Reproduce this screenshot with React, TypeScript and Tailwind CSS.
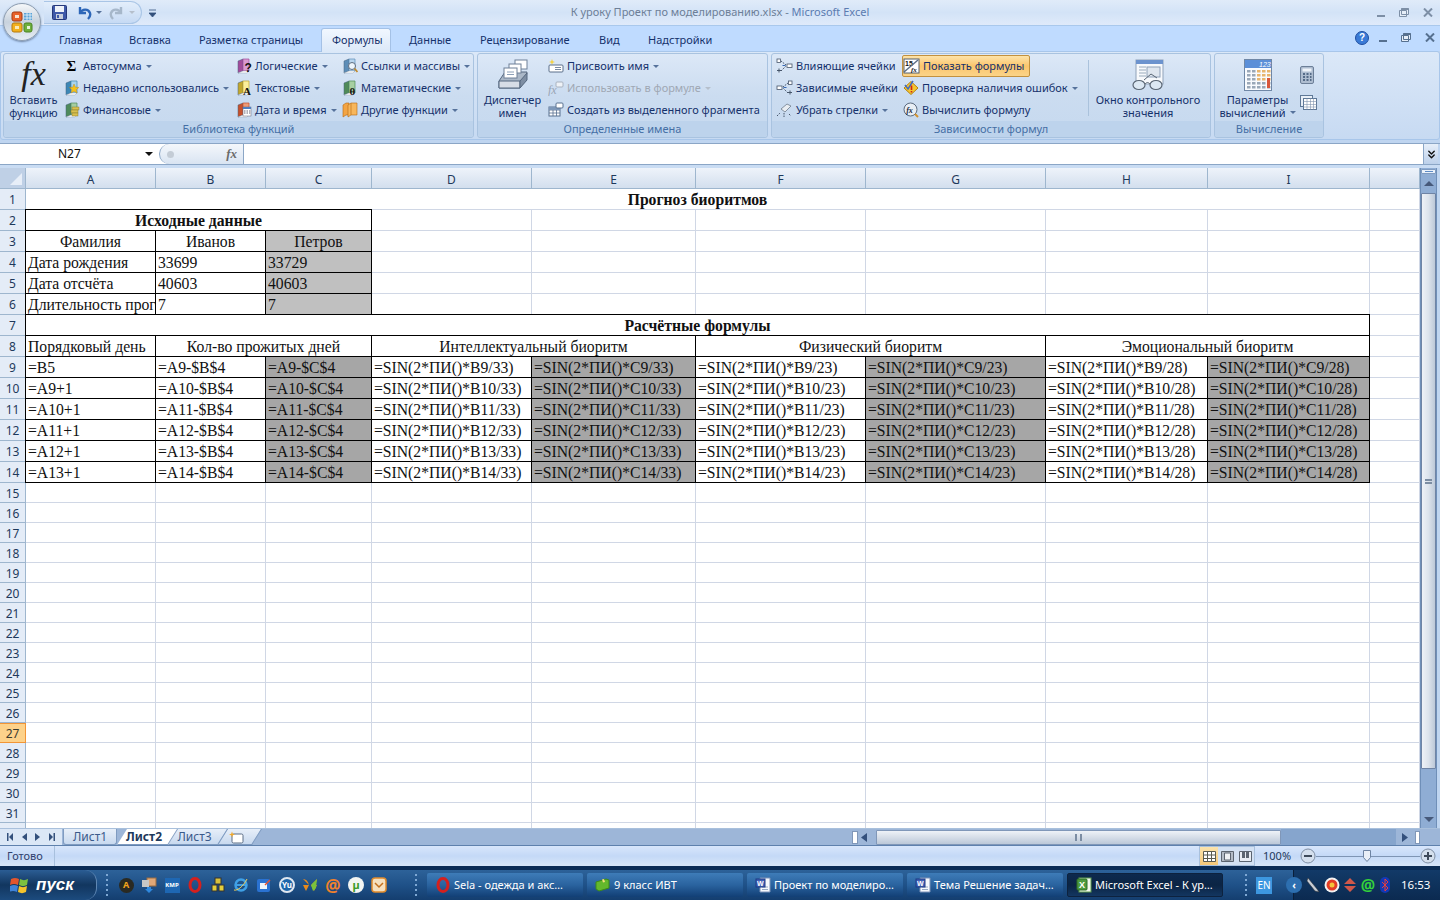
import type { ReactNode } from 'react'
import { ChevronsDown } from 'lucide-react'

const tabs = [
  { label: 'Главная', w: 'w-[70px]' },
  { label: 'Вставка', w: 'w-[70px]' },
  { label: 'Разметка страницы', w: 'w-[132px]' },
  { label: 'Формулы', w: 'w-[78px]', active: true },
  { label: 'Данные', w: 'w-[71px]' },
  { label: 'Рецензирование', w: 'w-[119px]' },
  { label: 'Вид', w: 'w-[49px]' },
  { label: 'Надстройки', w: 'w-[90px]' },
]

const Caret = ({ muted }: { muted?: boolean }) => (
  <svg width="6" height="3" viewBox="0 0 6 3" className="ml-[4px] shrink-0">
    <path d="M0 0h6L3 3z" fill={muted ? '#b5bfcc' : '#56729b'} />
  </svg>
)

const Book = ({ color, dark, children }: { color: string; dark: string; children?: ReactNode }) => (
  <svg width="16" height="16" viewBox="0 0 16 16">
    <path d="M2 3 7 1v12l-5 2z" fill={dark} stroke="#44607f" strokeWidth=".5" />
    <path d="M7 1h6v12H7z" fill={color} stroke={dark} strokeWidth=".7" />
    <path d="M2 15h9l2-2H7z" fill="#fff" stroke="#8a97a8" strokeWidth=".4" />
    {children}
  </svg>
)

const Sigma = () => <span className="w-4 text-center font-['Liberation_Serif',serif] text-[15px] leading-none font-bold text-black">Σ</span>

const RecentIcon = () => (
  <Book color="#a9d4ee" dark="#3d87b5">
    <path d="m10 4 1.500 3.200 3.300.3-2.500 2.200.8 3.300L10 11.200 7.100 13l.8-3.300-2.500-2.200 3.300-.3z" fill="#f5c21b" stroke="#b77d10" strokeWidth=".4" />
  </Book>
)
const FinanceIcon = () => (
  <Book color="#a5cda0" dark="#4e8a5b">
    <rect x="8" y="5" width="7" height="3" fill="#d9c04e" stroke="#78702a" strokeWidth=".4" />
    <rect x="7" y="8" width="7" height="3" fill="#d9c04e" stroke="#78702a" strokeWidth=".4" />
    <rect x="8" y="11" width="6" height="3" fill="#d9c04e" stroke="#78702a" strokeWidth=".4" />
  </Book>
)
const LogicIcon = () => (
  <Book color="#d99ad0" dark="#a24c9b">
    <text x="8.500" y="14" fontSize="12" fontWeight="700" fontFamily="'Liberation Sans',sans-serif" fill="#111">?</text>
  </Book>
)
const TextIcon = () => (
  <Book color="#fbef9b" dark="#c2a72c">
    <text x="7" y="14.500" fontSize="11" fontWeight="700" fontFamily="'Liberation Serif',serif" fill="#111">A</text>
  </Book>
)
const DateIcon = () => (
  <Book color="#ee9c78" dark="#c6502b">
    <rect x="7" y="5" width="8" height="9" fill="#fff" stroke="#667" strokeWidth=".5" />
    <rect x="7" y="5" width="8" height="2" fill="#4f7fc0" />
    <path d="M8 9h1.500M10.500 9H12M13 9h1.300M8 11h1.500M10.500 11H12M13 11h1.300" stroke="#667" strokeWidth="1" />
  </Book>
)
const RefIcon = () => (
  <Book color="#b9d6ee" dark="#5d8db7">
    <circle cx="10" cy="8" r="3.500" fill="#eef6fc" stroke="#5d6d80" strokeWidth="1" />
    <path d="m12.500 10.500 3 3.500" stroke="#c08a2e" strokeWidth="1.800" />
  </Book>
)
const MathIcon = () => (
  <Book color="#a7cfa2" dark="#4f8a58">
    <text x="7.500" y="14.500" fontSize="11" fontWeight="700" fontFamily="'Liberation Serif',serif" fill="#111">θ</text>
  </Book>
)
const OtherIcon = () => (
  <svg width="16" height="16" viewBox="0 0 16 16">
    <path d="M1 3 4 1h3v12H4l-3 2z" fill="#f3a443" stroke="#b56a12" strokeWidth=".6" />
    <path d="M6 3 9 1h6v12H9l-3 2z" fill="#f7b65b" stroke="#b56a12" strokeWidth=".6" />
    <path d="M9 1v12" stroke="#b56a12" strokeWidth=".6" />
  </svg>
)
const NameTagIcon = () => (
  <svg width="16" height="16" viewBox="0 0 16 16">
    <path d="m4 1 .8 2.200L7 4l-2.200.8L4 7l-.8-2.200L1 4l2.200-.8z" fill="#f6d23e" />
    <rect x="1" y="7" width="14" height="7" rx="1" fill="#fff" stroke="#5b6f8a" />
    <path d="M7 9.500h6M7 11.500h6" stroke="#7a8ba3" />
  </svg>
)
const UseFormulaIcon = () => (
  <svg width="16" height="16" viewBox="0 0 16 16">
    <text x="0" y="14" fontSize="12" fontStyle="italic" fontFamily="'Liberation Serif',serif" fill="#9aa5b4">fx</text>
    <rect x="8" y="2" width="7" height="5" rx="1" fill="#eef2f7" stroke="#a8b2bf" />
  </svg>
)
const CreateIcon = () => (
  <svg width="16" height="16" viewBox="0 0 16 16">
    <rect x="1" y="5" width="11" height="9" fill="#fff" stroke="#58708f" />
    <path d="M1 8h11M1 11h11M5 5v9M8.500 5v9" stroke="#58708f" strokeWidth=".8" />
    <rect x="1" y="5" width="11" height="3" fill="#7e98b9" />
    <rect x="8" y="1" width="7" height="5" rx="1" fill="#fff" stroke="#58708f" />
  </svg>
)
const TraceIcon = ({ flip }: { flip?: boolean }) => (
  <svg width="17" height="16" viewBox="0 0 17 16" className={flip ? '-scale-x-100' : ''}>
    <rect x="1" y="1" width="3.500" height="3.500" fill="#fff" stroke="#47566b" strokeWidth=".8" />
    <path d="M1 12.500h4M3 10.500v4" stroke="#47566b" />
    <rect x="11" y="6" width="5" height="3.500" fill="#fff" stroke="#47566b" strokeWidth=".8" />
    <path d="M5 3l5 4M5 13l5-5" stroke="#47566b" strokeDasharray="1.500 1" />
    <path d="M6.500 7.500h3" stroke="#3467b5" />
  </svg>
)
const EraseIcon = () => (
  <svg width="17" height="16" viewBox="0 0 17 16">
    <path d="m5 7 6-5 4 2-6 6z" fill="#e9edf2" stroke="#6f7c8c" strokeWidth=".8" />
    <path d="M1 14 4 11M8 11v4M13 12l2 2" stroke="#47566b" strokeDasharray="1.500 1" />
  </svg>
)
const ShowFormulaIcon = () => (
  <svg width="17" height="16" viewBox="0 0 17 16">
    <rect x="1" y="1" width="15" height="14" fill="#fff" stroke="#54606e" />
    <text x="2" y="8" fontSize="7" fontWeight="700" fontFamily="'Liberation Sans',sans-serif" fill="#111">15</text>
    <text x="8" y="14" fontSize="7" fontWeight="700" fontStyle="italic" fontFamily="'Liberation Serif',serif" fill="#111">fx</text>
    <path d="M1 14 15 2" stroke="#5c6e86" strokeWidth="1.500" />
  </svg>
)
const ErrorCheckIcon = () => (
  <svg width="16" height="16" viewBox="0 0 16 16">
    <path d="M8 1.500 15 8l-7 6.500L1 8z" fill="#f5c530" stroke="#b58212" />
    <path d="M2 5l3 4 5-8" fill="none" stroke="#3f6bc4" strokeWidth="1.500" />
    <path d="M8.500 5.500v4.500M8.500 11v1.500" stroke="#c9241c" strokeWidth="1.600" />
  </svg>
)
const EvalIcon = () => (
  <svg width="16" height="16" viewBox="0 0 16 16">
    <circle cx="7.500" cy="7.500" r="6.500" fill="#e8eef5" stroke="#5b6b7f" />
    <text x="3.200" y="10.500" fontSize="8" fontStyle="italic" fontWeight="700" fontFamily="'Liberation Serif',serif" fill="#1b2c44">fx</text>
    <path d="m12 12 3 3" stroke="#d2922f" strokeWidth="2" />
  </svg>
)

const FxBig = () => (
  <span className="block h-[36px] text-center font-['Liberation_Serif',serif] text-[34px] leading-[34px] text-[#222] italic">fx</span>
)
const NameManagerIcon = () => (
  <svg width="32" height="32" viewBox="0 0 32 32">
    <path d="M2 22 8 13h22l-1 6-6 10H2z" fill="#aab7c7" stroke="#55677e" />
    <path d="M2 22h21v7H2z" fill="#d7dde6" stroke="#55677e" />
    <path d="M23 22l7-8v7l-7 8z" fill="#7e8ea3" stroke="#55677e" />
    <rect x="18" y="1" width="12" height="9" fill="#fff" stroke="#6f8098" />
    <rect x="12" y="5" width="12" height="9" fill="#fff" stroke="#6f8098" />
    <rect x="7" y="9" width="13" height="10" fill="#fff" stroke="#6f8098" />
    <path d="M10 13h7M10 15.500h7" stroke="#8da0b8" />
  </svg>
)
const WatchIcon = () => (
  <svg width="32" height="32" viewBox="0 0 32 32">
    <rect x="4" y="1" width="27" height="24" fill="#f7f9fc" stroke="#8fa1b8" />
    <rect x="4" y="1" width="27" height="4" fill="#6c93ce" />
    <path d="M7 8h7M7 11h7M7 14h7M7 17h7" stroke="#9ab" />
    <rect x="15" y="8" width="13" height="10" fill="#dfe6ef" stroke="#8fa1b8" />
    <ellipse cx="7" cy="26" rx="6" ry="4.500" fill="#dce8f3" stroke="#5a6674" strokeWidth="1.200" />
    <ellipse cx="24" cy="26" rx="6" ry="4.500" fill="#dce8f3" stroke="#5a6674" strokeWidth="1.200" />
    <path d="M13 25c2-2 3-2 5 0M12 21l7-6 6 4" fill="none" stroke="#5a6674" />
  </svg>
)
const CalcOptionsIcon = () => (
  <svg width="28" height="32" viewBox="0 0 28 32">
    <rect x=".5" y=".5" width="27" height="31" fill="#f9fbfe" stroke="#6f87a6" />
    <rect x="1" y="1" width="26" height="8" fill="#5b8fd8" />
    <text x="15" y="8" fontSize="7" fontStyle="italic" fontFamily="'Liberation Sans',sans-serif" fill="#fff">123</text>
    {[11, 15, 19, 23, 27].map((y) => [3, 8, 13, 18, 23].map((x) => (
      <rect key={`${x}-${y}`} x={x} y={y} width="3.500" height="2.500" fill={x > 12 && y < 20 ? '#e7b56e' : '#9aa8b8'} />
    )))}
    <rect x="23" y="19" width="3" height="10" fill="#d9583c" />
  </svg>
)
const CalcIcon = () => (
  <svg width="14" height="18" viewBox="0 0 14 18">
    <rect x=".5" y=".5" width="13" height="17" rx="1.500" fill="#aebdd0" stroke="#6c7f98" />
    <rect x="2.500" y="2.500" width="9" height="3" fill="#eef3f9" />
    <path d="M3 8h2M6.500 8h2M10 8h1.500M3 11h2M6.500 11h2M10 11h1.500M3 14h2M6.500 14h2M10 14h1.500" stroke="#39506f" strokeWidth="1.300" />
  </svg>
)
const CalcSheetIcon = () => (
  <svg width="17" height="16" viewBox="0 0 17 16">
    <rect x=".5" y=".5" width="12" height="11" fill="#e9f0f8" stroke="#5e7897" />
    <rect x="3.500" y="3.500" width="13" height="11" fill="#fff" stroke="#5e7897" />
    <path d="M3.500 6.500h13M3.500 9.500h13M3.500 12h13M7 3.500v11M10.500 3.500v11M13.500 3.500v11" stroke="#7f94ae" strokeWidth=".6" />
  </svg>
)

const Item = ({ icon, label, caret, muted }: { icon?: ReactNode; label: string; caret?: boolean; muted?: boolean }) => (
  <div className={`flex h-[22px] items-center gap-[3px] whitespace-nowrap ${muted ? 'text-[#a0a8b4]' : 'text-[#15316b]'}`}>
    <span className="flex w-[17px] shrink-0 justify-center">{icon}</span>
    <span>{label}</span>
    {caret && <span className="-ml-[3px] flex"><Caret muted={muted} /></span>}
  </div>
)

const Group = ({ w, label, gap, children }: { w: string; label: string; gap?: boolean; children: ReactNode }) => (
  <section className={`flex h-[85px] ${w} ${gap ? 'ml-[3px]' : ''} shrink-0 flex-col rounded-[3px] border border-[#a9c3e0] bg-gradient-to-b from-[#dce8f7] via-[#cbdcf0] to-[#c6d9ef]`}>
    <div className="flex flex-1 pt-[1px]">{children}</div>
    <div className="h-[16px] rounded-b-[3px] bg-[#bdd3ec] text-center text-[11px] leading-[15px] text-[#456fa5]">{label}</div>
  </section>
)

const BigButton = ({ w, icon, lines, caret }: { w: string; icon: ReactNode; lines: string[]; caret?: boolean }) => (
  <div className={`flex ${w} shrink-0 flex-col items-center pt-[2px] text-[#15316b]`}>
    <div className="flex h-[35px] items-center">{icon}</div>
    <div className="mt-[1px] text-center leading-[13px] whitespace-nowrap">
      {lines[0]}
      <br />
      <span className="inline-flex items-center">{lines[1]}{caret && <Caret />}</span>
    </div>
  </div>
)

const OfficeLogo = () => (
  <div className="absolute top-[3px] left-[3px] z-30 flex h-[38px] w-[38px] items-center justify-center rounded-full border border-[#8d9db0] bg-gradient-to-b from-[#f6f8fa] via-[#c8d2dd] to-[#e6edf3] shadow-[0_1px_2px_#6e84a3]">
    <svg width="24" height="24" viewBox="0 0 24 24">
      <rect x="2" y="2" width="10" height="9" rx="2" fill="#e8612a" stroke="#a53c14" />
      <rect x="5" y="5" width="4" height="3" fill="#f8e2cf" />
      <rect x="14" y="3" width="8" height="7" fill="#5aa3d8" />
      <path d="M14 5h8M14 8h8M17 3v7M20 3v7" stroke="#fff" strokeWidth=".7" />
      <rect x="2" y="13" width="10" height="9" rx="2" fill="#f3b01c" stroke="#b57b0d" />
      <rect x="5" y="16" width="4" height="3" fill="#fbe9b4" />
      <rect x="14" y="13" width="8" height="9" rx="2" fill="#6fb03c" stroke="#4a8420" />
      <rect x="17" y="16" width="3" height="3" fill="#e6f3d5" />
    </svg>
  </div>
)

const QuickAccess = () => (
  <div className="ml-[44px] flex h-[23px] items-center">
    <div className="flex h-[23px] w-[98px] items-center rounded-r-[12px] border border-l-0 border-[#a9c5e6] bg-gradient-to-b from-[#e3eefb] to-[#c6daf4] pl-[8px]">
      <svg width="15" height="15" viewBox="0 0 15 15">
        <rect x=".5" y=".5" width="14" height="14" rx="1" fill="#3f59a8" stroke="#26387a" />
        <rect x="3" y="1" width="9" height="6" fill="#eef2f9" />
        <rect x="4" y="9" width="7" height="5" fill="#c8cfdb" />
        <rect x="5" y="10" width="2" height="3" fill="#3f59a8" />
      </svg>
      <svg width="16" height="15" viewBox="0 0 16 15" className="ml-[9px]">
        <path d="M4 2v6h6M4 8c2-4 8-5 10 0 .8 2.500-.5 4.500-2 6" fill="none" stroke="#2d66b8" strokeWidth="2.400" />
      </svg>
      <Caret />
      <svg width="16" height="15" viewBox="0 0 16 15" className="ml-[7px]">
        <path d="M12 2v6H6M12 8C10 4 4 3 2 8c-.8 2.500.5 4.500 2 6" fill="none" stroke="#a6b7ca" strokeWidth="2.400" />
      </svg>
      <Caret muted />
    </div>
    <svg width="7" height="8" viewBox="0 0 7 8" className="ml-[7px]">
      <path d="M0 1h7M0 4h7L3.500 8z" fill="#33507c" stroke="#33507c" strokeWidth=".8" />
    </svg>
  </div>
)

const WinControls = ({ light }: { light?: boolean }) => {
  const c = light ? '#56708f' : '#7d8fa6'
  return (
    <div className="flex items-center gap-[14px]">
      <span className="mt-[7px] block h-[2px] w-[8px]" style={{ background: c }} />
      <svg width="10" height="9" viewBox="0 0 10 9">
        <path d="M2.500.5h7v6h-7zM.5 2.500h7v6h-7z" fill="#e6eef8" stroke={c} />
        <path d="M2.500 1h7" stroke={c} strokeWidth="2" />
      </svg>
      <svg width="10" height="9" viewBox="0 0 10 9">
        <path d="m1 .5 8 8M9 .5l-8 8" stroke={c} strokeWidth="2" />
      </svg>
    </div>
  )
}

const FormulaBar = () => (
  <div className="mt-[3px] flex h-[22px] shrink-0 border-y border-[#8ba6c6] bg-white">
    <div className="flex w-[156px] items-center justify-between pr-[3px] pl-[58px] font-['Noto_Sans',sans-serif] text-[12px] text-[#111]">
      N27
      <svg width="8" height="4" viewBox="0 0 8 4"><path d="M0 0h8L4 4z" fill="#111" /></svg>
    </div>
    <div className="ml-[3px] flex w-[85px] items-center justify-end rounded-l-[10px] border-r border-l border-[#8ba6c6] bg-gradient-to-b from-[#f4f7fb] to-[#d9e4f2] pr-[6px]">
      <span className="mr-auto ml-[7px] h-[7px] w-[7px] rounded-full bg-[#c4ccd6]" />
      <span className="font-['Liberation_Serif',serif] text-[13px] font-bold text-[#6b6b6b] italic">fx</span>
    </div>
    <div className="flex-1" />
    <div className="flex w-[15px] items-center justify-center border-l border-[#8ba6c6] bg-gradient-to-b from-[#e7eff9] to-[#bcd0ea]">
      <ChevronsDown size={13} strokeWidth={2.6} color="#111" />
    </div>
    <div className="w-[2px] bg-[#bfd5f0]" />
  </div>
)

const colLetters = ['A', 'B', 'C', 'D', 'E', 'F', 'G', 'H', 'I', '']
const colClass = 'grid-cols-[130px_110px_106px_160px_164px_170px_180px_162px_162px_50px]'

type CellDef = { t?: string; span?: string; fill?: string; center?: boolean; bold?: boolean; box?: boolean }

const dataRow = (r: number): CellDef[] => [
  { t: r === 9 ? '=B5' : `=A${r - 1}+1`, box: true },
  { t: `=A${r}-$B$4`, box: true },
  { t: `=A${r}-$C$4`, box: true, fill: 'bg-[#a6a6a6]' },
  { t: `=SIN(2*ПИ()*B${r}/33)`, box: true },
  { t: `=SIN(2*ПИ()*C${r}/33)`, box: true, fill: 'bg-[#a6a6a6]' },
  { t: `=SIN(2*ПИ()*B${r}/23)`, box: true },
  { t: `=SIN(2*ПИ()*C${r}/23)`, box: true, fill: 'bg-[#a6a6a6]' },
  { t: `=SIN(2*ПИ()*B${r}/28)`, box: true },
  { t: `=SIN(2*ПИ()*C${r}/28)`, box: true, fill: 'bg-[#a6a6a6]' },
  {},
]

const blanks = (n: number): CellDef[] => Array.from({ length: n }, () => ({}))

const rows: CellDef[][] = [
  [{ t: 'Прогноз биоритмов', span: 'col-span-9', center: true, bold: true }, {}],
  [{ t: 'Исходные данные', span: 'col-span-3', center: true, bold: true, box: true }, ...blanks(7)],
  [{ t: 'Фамилия', center: true, box: true }, { t: 'Иванов', center: true, box: true }, { t: 'Петров', center: true, box: true, fill: 'bg-[#c0c0c0]' }, ...blanks(7)],
  [{ t: 'Дата рождения', box: true }, { t: '33699', box: true }, { t: '33729', box: true, fill: 'bg-[#c0c0c0]' }, ...blanks(7)],
  [{ t: 'Дата отсчёта', box: true }, { t: '40603', box: true }, { t: '40603', box: true, fill: 'bg-[#c0c0c0]' }, ...blanks(7)],
  [{ t: 'Длительность прогноза', box: true }, { t: '7', box: true }, { t: '7', box: true, fill: 'bg-[#c0c0c0]' }, ...blanks(7)],
  [{ t: 'Расчётные формулы', span: 'col-span-9', center: true, bold: true, box: true }, {}],
  [
    { t: 'Порядковый день', box: true },
    { t: 'Кол-во прожитых дней', span: 'col-span-2', center: true, box: true },
    { t: 'Интеллектуальный биоритм', span: 'col-span-2', center: true, box: true },
    { t: 'Физический биоритм', span: 'col-span-2', center: true, box: true },
    { t: 'Эмоциональный биоритм', span: 'col-span-2', center: true, box: true },
    {},
  ],
  ...[9, 10, 11, 12, 13, 14].map(dataRow),
]

const Cell = ({ c }: { c: CellDef }) => (
  <div
    className={`overflow-hidden whitespace-nowrap ${c.span ?? ''} ${c.fill ?? ''} ${c.center ? 'text-center' : 'pl-[2px]'} ${c.bold ? 'font-bold' : ''} ${
      c.box ? '-mt-px -ml-px border border-black' : 'border-r border-b border-[#d0d7e5]'
    }`}
  >
    {c.t}
  </div>
)

const RowHead = ({ n, h }: { n?: number; h: string }) => (
  <div className={`flex ${h} w-[26px] items-center justify-center border-r border-b pt-[2px] font-['Noto_Sans',sans-serif] text-[12px] ${n === 27 ? 'border-t border-[#f29536] bg-[#fdd28a] text-[#3b3b2e]' : 'border-[#9eb6ce] bg-[#e4ecf7] text-[#1e395b]'}`}>
    {n}
  </div>
)

const Sheet = () => (
  <div className="flex min-h-0 flex-1 overflow-hidden">
    <div className="flex-1 overflow-hidden bg-white">
      <div className="flex h-[21px] border-b border-[#9eb6ce] bg-gradient-to-b from-[#eef3fa] to-[#d3dfee] font-['Noto_Sans',sans-serif] text-[12px] text-[#1e395b]">
        <div className="flex h-[20px] w-[26px] items-end justify-end border-r border-[#9eb6ce] bg-[#bfd0e6] p-[3px]">
          <svg width="12" height="12" viewBox="0 0 12 12"><path d="M12 0v12H0z" fill="#e7eef8" /></svg>
        </div>
        <div className={`grid flex-1 ${colClass}`}>
          {colLetters.map((l, i) => (
            <div key={i} className="border-r border-[#9eb6ce] pt-[3px] text-center leading-[17px]">{l}</div>
          ))}
        </div>
      </div>
      {rows.map((cells, i) => (
        <div key={i} className="flex h-[21px]">
          <RowHead n={i + 1} h="h-[21px]" />
          <div className={`grid flex-1 ${colClass} font-['Liberation_Serif',serif] text-[15.7px] leading-[22px] text-[#111]`}>
            {cells.map((c, j) => <Cell key={j} c={c} />)}
          </div>
        </div>
      ))}
      {Array.from({ length: 18 }, (_, i) => i + 15).map((n) => (
        <div key={n} className="flex h-[20px]">
          <RowHead n={n < 32 ? n : undefined} h="h-[20px]" />
          <div className={`grid flex-1 ${colClass}`}>
            {colLetters.map((_, j) => <div key={j} className="border-r border-b border-[#d0d7e5]" />)}
          </div>
        </div>
      ))}
    </div>
    <VScroll />
  </div>
)

const VScroll = () => (
  <div className="flex w-[20px] shrink-0">
    <div className="flex w-[17px] flex-col border-x border-[#6f8fb8] bg-[#8fadd4]">
      <div className="mt-[1px] flex h-[5px] w-[15px] items-center justify-center rounded-[1px] border border-[#7f9bc0] bg-[#eaf1fa]">
        <span className="h-px w-[8px] bg-[#5d8ac4]" />
      </div>
      <div className="flex h-[19px] items-center justify-center">
        <svg width="10" height="5" viewBox="0 0 10 5"><path d="M5 0l5 5H0z" fill="#46597a" /></svg>
      </div>
      <div className="flex h-[576px] w-[15px] items-center justify-center rounded-[1px] border border-[#6f84a5] bg-gradient-to-r from-[#eef2f7] via-[#dce3ec] to-[#bcc8d8]">
        <div className="h-[5px] w-[7px] border-y-2 border-[#7c8da3]" />
      </div>
      <div className="mt-auto flex h-[18px] items-center justify-center">
        <svg width="10" height="5" viewBox="0 0 10 5"><path d="M0 0h10L5 5z" fill="#46597a" /></svg>
      </div>
    </div>
    <div className="w-[3px] bg-[#bfd5f0]" />
  </div>
)

const SheetTab = ({ w, active, z, children }: { w: string; active?: boolean; z: string; children: ReactNode }) => (
  <div className={`relative flex h-[16px] ${w} ${z} items-center justify-center font-['Noto_Sans',sans-serif] text-[12px] ${active ? 'font-bold text-[#1e395b]' : 'text-[#3b5a8a]'}`}>
    <span className={`absolute inset-0 origin-bottom -skew-x-[32deg] border-r border-b border-[#7f9bc0] ${active ? 'bg-white' : 'bg-gradient-to-b from-[#e7eff9] to-[#c8d9ef]'}`} />
    <span className="relative pl-[3px]">{children}</span>
  </div>
)

const SheetTabs = () => (
  <div className="flex h-[17px] shrink-0 items-start border-t border-[#a9c0dc] bg-[#9db6d8]">
    <div className="relative z-20 flex h-[16px] w-[62px] items-center justify-between bg-[#dbe7f6] px-[7px] text-[#1e395b]">
      <svg width="6" height="8" viewBox="0 0 6 8"><path d="M0 0h1.500v8H0zM6 0v8L2 4z" fill="#33507c" /></svg>
      <svg width="5" height="8" viewBox="0 0 5 8"><path d="M5 0v8L0 4z" fill="#33507c" /></svg>
      <svg width="5" height="8" viewBox="0 0 5 8"><path d="M0 0v8l5-4z" fill="#33507c" /></svg>
      <svg width="6" height="8" viewBox="0 0 6 8"><path d="M0 0v8l4-4zM4.500 0H6v8H4.500z" fill="#33507c" /></svg>
    </div>
    <div className="ml-[1px] flex">
      <div className="relative z-10 flex h-[16px] w-[54px] items-center justify-center rounded-b-[3px] border border-t-0 border-[#7f9bc0] bg-gradient-to-b from-[#e7eff9] to-[#c8d9ef] font-['Noto_Sans',sans-serif] text-[12px] text-[#3b5a8a]">Лист1</div>
      <SheetTab w="w-[51px]" z="z-[9]" active>Лист2</SheetTab>
      <SheetTab w="w-[50px]" z="z-[8]">Лист3</SheetTab>
      <SheetTab w="w-[34px]" z="z-[7]">
        <svg width="15" height="13" viewBox="0 0 15 13" className="block">
          <rect x="3" y="3" width="11" height="9" rx="1.500" fill="#fff" stroke="#5c6e86" />
          <path d="m3 .5.8 2.200L6 3.500l-2.200.8L3 6.500l-.8-2.200L0 3.500l2.200-.8z" fill="#f0a92c" />
        </svg>
      </SheetTab>
    </div>
    <div className="ml-auto flex h-[16px] w-[588px] items-center">
      <div className="h-[13px] w-[6px] border border-[#8097b8] bg-white" />
      <svg width="6" height="9" viewBox="0 0 6 9" className="ml-[3px]"><path d="M6 0v9L0 4.500z" fill="#33507c" /></svg>
      <div className="ml-[9px] flex h-[15px] w-[405px] items-center justify-center rounded-[1px] border border-[#8097b8] bg-gradient-to-b from-[#eef2f7] to-[#bcc8d8]">
        <div className="h-[7px] w-[7px] border-x-2 border-[#7c8da3]" />
      </div>
      <div className="h-[16px] flex-1 bg-[#86a5cd]" />
      <svg width="6" height="9" viewBox="0 0 6 9" className="mx-[6px]"><path d="M0 0v9l6-4.500z" fill="#33507c" /></svg>
      <div className="mr-[20px] ml-[1px] h-[13px] w-[5px] border border-[#8097b8] bg-white" />
    </div>
  </div>
)

const StatusBar = () => (
  <div className="flex h-[21px] shrink-0 items-center border-t border-[#5f81ad] bg-gradient-to-b from-[#d8e6fb] via-[#c4d9f7] to-[#d8e6f8] text-[#30406e]">
    <div className="flex h-full w-[55px] items-center border-r border-[#a8c0dd] pl-[7px]">Готово</div>
    <div className="ml-auto flex h-[20px] w-[56px] items-center border border-[#a8c0dd] bg-[#d3e1f3]">
      <div className="flex h-full w-[18px] items-center justify-center bg-gradient-to-b from-[#fbe3ac] to-[#f7c978]">
        <svg width="13" height="11" viewBox="0 0 13 11"><path d="M.5.500h12v10H.500zM.5 4h12M.5 7.500h12M4.500.5v10M8.500.5v10" fill="#fff" stroke="#5b5b50" /></svg>
      </div>
      <div className="flex h-full w-[18px] items-center justify-center">
        <svg width="13" height="11" viewBox="0 0 13 11"><path d="M.5.500h12v10H.500z" fill="#b4bcc7" stroke="#5b6470" /><path d="M3.500 2h6v7h-6z" fill="#eef1f5" stroke="#5b6470" /></svg>
      </div>
      <div className="flex h-full w-[18px] items-center justify-center">
        <svg width="13" height="11" viewBox="0 0 13 11"><path d="M.5.500h12v10H.500z" fill="#e7ecf3" stroke="#5b6470" /><path d="M3 1v6h3V1zM7 1v6h3V1z" fill="#5b6470" /></svg>
      </div>
    </div>
    <div className="ml-[8px] w-[28px] font-['Noto_Sans',sans-serif] text-[11px] whitespace-nowrap text-[#1e395b]">100%</div>
    <svg width="16" height="16" viewBox="0 0 16 16" className="ml-[9px]">
      <circle cx="8" cy="8" r="7" fill="#d4dfed" stroke="#7f8ea3" />
      <path d="M4 8h8" stroke="#3e4a5a" strokeWidth="2" />
    </svg>
    <div className="relative h-[1px] w-[104px] bg-[#7f95b4]">
      <svg width="8" height="12" viewBox="0 0 8 12" className="absolute -top-[6px] left-[47px]">
        <path d="M.5.500h7v7L4 11.500.5 7.500z" fill="#e9eff7" stroke="#6e84a3" />
      </svg>
    </div>
    <svg width="16" height="16" viewBox="0 0 16 16" className="mr-[4px]">
      <circle cx="8" cy="8" r="7" fill="#d4dfed" stroke="#7f8ea3" />
      <path d="M4 8h8M8 4v8" stroke="#3e4a5a" strokeWidth="2" />
    </svg>
  </div>
)

const Quick = ({ children }: { children: ReactNode }) => (
  <span className="flex h-[16px] w-[16px] shrink-0 items-center justify-center">{children}</span>
)

const OperaIcon = () => (
  <svg width="14" height="16" viewBox="0 0 14 16"><ellipse cx="7" cy="8" rx="5" ry="6.500" fill="none" stroke="#d4201e" strokeWidth="3" /></svg>
)
const WordIcon = () => (
  <svg width="16" height="16" viewBox="0 0 16 16">
    <path d="M5 1h10v14H5z" fill="#f5f8fd" stroke="#7c93b8" />
    <path d="M7 10h6M7 12.500h6" stroke="#98a9c4" />
    <rect x="1" y="2" width="9" height="8" fill="#4162b8" stroke="#1f3a85" />
    <text x="2" y="9" fontSize="7" fontWeight="700" fontFamily="'Liberation Sans',sans-serif" fill="#fff">W</text>
  </svg>
)
const ExcelIcon = () => (
  <svg width="16" height="16" viewBox="0 0 16 16">
    <rect x="3" y="1" width="12" height="14" fill="#f2f9ee" stroke="#5d9a4d" />
    <rect x="1" y="2" width="10" height="11" rx="1" fill="#4d9a3f" stroke="#2d6f24" />
    <text x="3" y="11" fontSize="9" fontWeight="700" fontFamily="'Liberation Sans',sans-serif" fill="#fff">X</text>
  </svg>
)
const FolderIcon = () => (
  <svg width="16" height="16" viewBox="0 0 16 16">
    <path d="M1 5l10-3 3 1v8l-10 3-3-2z" fill="#63b82c" stroke="#3c8a18" />
    <path d="M7 2.500 9 2l1 3-2 .5z" fill="#f1df78" />
  </svg>
)

const TaskButton = ({ icon, label, active }: { icon: ReactNode; label: string; active?: boolean }) => (
  <div
    className={`flex h-[24px] w-[156px] shrink-0 items-center gap-[3px] overflow-hidden rounded-[2px] pl-[8px] text-[11px] whitespace-nowrap text-white ${
      active ? 'border border-[#0d223e] bg-gradient-to-b from-[#0d2a4e] via-[#0b2444] to-[#133660]' : 'bg-gradient-to-b from-[#3e7cb8] via-[#2a639f] to-[#123f75]'
    }`}
  >
    <span className="flex w-[16px] shrink-0 justify-center">{icon}</span>
    {label}
  </div>
)

const Grip = () => (
  <div className="flex h-[22px] w-[5px] shrink-0 flex-col justify-between">
    {[0, 1, 2, 3, 4].map((i) => <span key={i} className="block h-[2px] w-[2px] bg-[#7ea8d4]" />)}
  </div>
)

const Taskbar = () => (
  <div className="flex h-[34px] shrink-0 flex-col bg-[#0c3462]">
    <div className="h-[4px] bg-[#0b2c55]" />
    <div className="flex flex-1 items-center bg-gradient-to-b from-[#2d6299] via-[#1f5188] to-[#143e6f] font-['Noto_Sans',sans-serif]">
      <div className="flex h-full w-[97px] shrink-0 items-center gap-[6px] rounded-r-[12px] border-r border-[#5f87b3] bg-gradient-to-b from-[#2b5d94] via-[#12365f] to-[#1c4b7e] pl-[10px]">
        <svg width="20" height="18" viewBox="0 0 20 18">
          <path d="M1 3c3-1.500 5-1.500 8 0l-1 6c-3-1.500-5-1.500-8 0z" fill="#e2552d" />
          <path d="M10 3c3 1.500 5 1.500 8 0l-1 6c-3 1.500-5 1.500-8 0z" fill="#7cc13f" />
          <path d="M0 10c3-1.500 5-1.500 8 0l-1 6c-3-1.500-5-1.500-8 0z" fill="#3f83d9" />
          <path d="M9 10c3 1.500 5 1.500 8 0l-1 6c-3 1.500-5 1.500-8 0z" fill="#f4c32c" />
        </svg>
        <span className="font-['Liberation_Sans',sans-serif] text-[17px] font-bold text-white italic">пуск</span>
      </div>
      <div className="ml-[9px] flex items-center gap-[7px]">
        <Grip />
        <div className="flex items-center gap-[7px]">
          <Quick><span className="flex h-[15px] w-[15px] items-center justify-center rounded-full bg-[#2a2a22] text-[9px] font-bold text-[#f3a41b]">A</span></Quick>
          <Quick><svg width="16" height="16" viewBox="0 0 16 16"><rect x="6" y="1" width="9" height="8" fill="#e0a878" stroke="#9a6c43" /><rect x="1" y="3" width="7" height="7" fill="#c7c7c7" /><path d="M6 10h4v2h2l-4 4-4-4h2z" fill="#2f89e0" /></svg></Quick>
          <Quick><span className="flex h-[15px] w-[15px] items-center justify-center bg-[#1e67b3] text-[6px] font-bold text-white">KMP</span></Quick>
          <Quick><OperaIcon /></Quick>
          <Quick><svg width="14" height="16" viewBox="0 0 14 16"><rect x="4" y="1" width="6" height="6" fill="#d8c13c" stroke="#333" /><rect x="1" y="8" width="5" height="6" fill="#e4cf3c" stroke="#333" /><rect x="8" y="8" width="5" height="6" fill="#e4cf3c" stroke="#333" /></svg></Quick>
          <Quick><svg width="16" height="16" viewBox="0 0 16 16"><circle cx="8" cy="8" r="5.500" fill="none" stroke="#3fa0e6" strokeWidth="2.500" /><path d="M3 8h10" stroke="#3fa0e6" strokeWidth="2" /><path d="M1 13c3 1 9-3 13-11" fill="none" stroke="#f3d25a" /></svg></Quick>
          <Quick><svg width="16" height="16" viewBox="0 0 16 16"><rect x="1" y="2" width="13" height="13" rx="2" fill="#2a72d2" /><path d="M4 6h7v6H4z" fill="#eef4fc" /><path d="m9 8 5-5" stroke="#e9502a" strokeWidth="1.500" /></svg></Quick>
          <Quick><span className="flex h-[16px] w-[16px] items-center justify-center rounded-full border-2 border-[#dfe7f0] bg-[#1e66aa] text-[8px] font-bold text-white">Yu</span></Quick>
          <Quick><svg width="16" height="14" viewBox="0 0 16 14"><path d="M7 7 1 1c3 0 5 2 6 6zM1 7h6l-3 6zM9 7l6-6c0 3-2 5-6 6zM15 7H9l3 6z" fill="#e98a1d" /><path d="M9 7l6-6-1 9-3 3z" fill="#7ac23c" /></svg></Quick>
          <Quick><span className="text-[17px] leading-none font-bold text-[#f0812c]">@</span></Quick>
          <Quick><span className="flex h-[16px] w-[16px] items-center justify-center rounded-full bg-[#f2f5f2] text-[11px] font-bold text-[#3c9b2b]">µ</span></Quick>
          <Quick><svg width="16" height="16" viewBox="0 0 16 16"><rect x="1" y="1" width="14" height="14" rx="3" fill="#f5e0bf" stroke="#e08b2c" strokeWidth="1.500" /><path d="m4 6 4 4 4-4" fill="none" stroke="#c2701f" strokeWidth="1.500" /></svg></Quick>
        </div>
        <div className="ml-[21px]"><Grip /></div>
      </div>
      <div className="ml-[7px] flex gap-[4px]">
        <TaskButton icon={<OperaIcon />} label="Sela - одежда и акс…" />
        <TaskButton icon={<FolderIcon />} label="9 класс ИВТ" />
        <TaskButton icon={<WordIcon />} label="Проект по моделиро…" />
        <TaskButton icon={<WordIcon />} label="Тема Решение задач…" />
        <TaskButton icon={<ExcelIcon />} label="Microsoft Excel - К ур…" active />
      </div>
      <div className="ml-[22px]"><Grip /></div>
      <div className="ml-[6px] flex h-[17px] w-[16px] items-center justify-center bg-[#3d97e0] text-[10px] text-white">EN</div>
      <div className="ml-auto flex h-full w-[147px] items-center gap-[3px] border-l border-[#0a1f3a] bg-gradient-to-b from-[#123a68] to-[#0b2a50]">
        <span className="ml-[-8px] flex h-[16px] w-[16px] items-center justify-center rounded-full bg-[#2d6fb0] text-[10px] font-bold text-white">‹</span>
        <svg width="16" height="16" viewBox="0 0 16 16"><path d="M3 1 12 12l2 3-4-1L2 4z" fill="#c8ced6" stroke="#333" strokeWidth=".5" /></svg>
        <svg width="16" height="16" viewBox="0 0 16 16"><circle cx="8" cy="8" r="7.500" fill="#f2f2f2" /><circle cx="8" cy="8" r="5.500" fill="#e33c25" /><circle cx="8" cy="8" r="2.500" fill="#f5c43a" /></svg>
        <svg width="14" height="16" viewBox="0 0 14 16"><path d="M7 1l6 6H1zM1 9h12l-6 6z" fill="#d1584a" /></svg>
        <span className="w-[16px] text-center text-[16px] leading-none font-bold text-[#34d13b]">@</span>
        <svg width="12" height="16" viewBox="0 0 12 16"><rect x="1" y="0" width="10" height="16" rx="5" fill="#1438b5" /><path d="M3 5l6 6-3 3V2l3 3-6 6" fill="none" stroke="#e83f3f" /></svg>
        <span className="ml-[7px] text-[11.500px] text-white">16:53</span>
      </div>
    </div>
  </div>
)

export default function App() {
  return (
    <div className="relative flex h-[900px] w-[1440px] flex-col overflow-hidden bg-[#bfd5f0] font-['Noto_Sans',sans-serif] text-[11px]">
      <OfficeLogo />
      {/* title bar */}
      <header className="flex h-[26px] shrink-0 items-center border-b border-[#a9c8ec] bg-gradient-to-b from-[#e0ebf9] via-[#d3e3f7] to-[#dfeafa]">
        <div className="w-[170px] shrink-0"><QuickAccess /></div>
        <div className="flex-1 text-center text-[#6d7f97]">
          К уроку Проект по моделированию.xlsx - <span className="text-[#5b7bb0]">Microsoft Excel</span>
        </div>
        <div className="flex w-[170px] shrink-0 justify-end pr-[7px]"><WinControls /></div>
      </header>
      {/* tabs */}
      <nav className="flex h-[25px] shrink-0 items-end bg-[#bfdbff] pl-[49px] text-[#15316b]">
        {tabs.map((t) => (
          <div key={t.label} className={`${t.w} shrink-0`}>
            {t.active ? (
              <div className="relative top-px z-10 flex h-[24px] w-[70px] items-center rounded-t-[3px] border border-b-0 border-[#a4c1e6] bg-gradient-to-b from-[#f1f7ff] to-[#dbe8f8] pl-[10px]">{t.label}</div>
            ) : (
              <div className="flex h-[23px] items-center pt-[1px] pl-[10px]">{t.label}</div>
            )}
          </div>
        ))}
        <div className="ml-auto flex h-[23px] items-center gap-[10px] pr-[5px] pb-[4px]">
          <span className="flex h-[14px] w-[14px] items-center justify-center rounded-full border border-[#1f4ea0] bg-[#3a7ad6] font-['Liberation_Sans',sans-serif] text-[10px] font-bold text-white">?</span>
          <WinControls light />
        </div>
      </nav>
      {/* ribbon */}
      <div className="flex h-[89px] shrink-0 rounded-[3px] border border-[#a8c6ea] bg-gradient-to-b from-[#dbe8f8] to-[#c7daf2] pt-[1px] pl-[2px]">
        <Group w="w-[471px]" label="Библиотека функций">
          <BigButton w="w-[59px]" icon={<FxBig />} lines={['Вставить', 'функцию']} />
          <div className="w-[172px] shrink-0">
            <Item icon={<Sigma />} label="Автосумма" caret />
            <Item icon={<RecentIcon />} label="Недавно использовались" caret />
            <Item icon={<FinanceIcon />} label="Финансовые" caret />
          </div>
          <div className="w-[105px] shrink-0">
            <Item icon={<LogicIcon />} label="Логические" caret />
            <Item icon={<TextIcon />} label="Текстовые" caret />
            <Item icon={<DateIcon />} label="Дата и время" caret />
          </div>
          <div className="ml-px shrink-0">
            <Item icon={<RefIcon />} label="Ссылки и массивы" caret />
            <Item icon={<MathIcon />} label="Математические" caret />
            <Item icon={<OtherIcon />} label="Другие функции" caret />
          </div>
        </Group>
        <Group w="w-[291px]" gap label="Определенные имена">
          <BigButton w="w-[69px]" icon={<NameManagerIcon />} lines={['Диспетчер', 'имен']} />
          <div className="shrink-0">
            <Item icon={<NameTagIcon />} label="Присвоить имя" caret />
            <Item icon={<UseFormulaIcon />} label="Использовать в формуле" caret muted />
            <Item icon={<CreateIcon />} label="Создать из выделенного фрагмента" />
          </div>
        </Group>
        <Group w="w-[440px]" gap label="Зависимости формул">
          <div className="ml-[4px] w-[126px] shrink-0">
            <Item icon={<TraceIcon />} label="Влияющие ячейки" />
            <Item icon={<TraceIcon flip />} label="Зависимые ячейки" />
            <Item icon={<EraseIcon />} label="Убрать стрелки" caret />
          </div>
          <div className="w-[186px] shrink-0">
            <div className="flex h-[22px] w-[128px] items-center gap-[3px] rounded-[2px] border border-[#c2913f] bg-gradient-to-b from-[#fde3a8] via-[#fbc56c] to-[#fbd488] whitespace-nowrap text-[#15316b]">
              <span className="flex w-[17px] shrink-0 justify-center"><ShowFormulaIcon /></span>
              Показать формулы
            </div>
            <Item icon={<ErrorCheckIcon />} label="Проверка наличия ошибок" caret />
            <Item icon={<EvalIcon />} label="Вычислить формулу" />
          </div>
          <div className="my-[5px] w-px bg-[#aac2dc]" />
          <BigButton w="w-[118px]" icon={<WatchIcon />} lines={['Окно контрольного', 'значения']} />
        </Group>
        <Group w="w-[110px]" gap label="Вычисление">
          <BigButton w="w-[85px]" icon={<CalcOptionsIcon />} lines={['Параметры', 'вычислений']} caret />
          <div className="flex flex-col gap-[11px] pt-[11px]">
            <CalcIcon />
            <CalcSheetIcon />
          </div>
        </Group>
      </div>
      <FormulaBar />
      <div className="h-[3px] shrink-0 bg-[#c9dcf3]" />
      <Sheet />
      <SheetTabs />
      <StatusBar />
      <Taskbar />
    </div>
  )
}
